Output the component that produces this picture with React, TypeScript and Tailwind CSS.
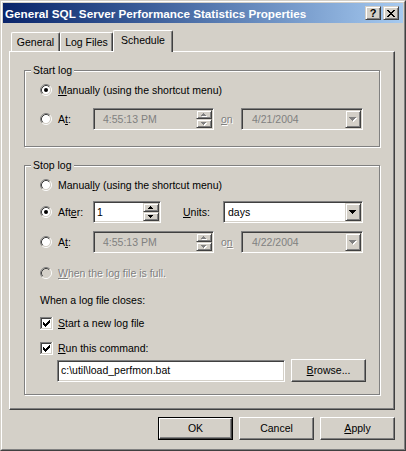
import type { ReactNode } from 'react'

// classic win2000 bevels
const raised =
  'border border-t-white border-l-white border-r-[#404040] border-b-[#404040] shadow-[inset_-1px_-1px_0_#808080]'
const raisedSmall =
  'border border-t-[#d4d0c8] border-l-[#d4d0c8] border-r-[#404040] border-b-[#404040] shadow-[inset_1px_1px_0_#ffffff,inset_-1px_-1px_0_#808080]'
const sunken =
  'border border-t-[#808080] border-l-[#808080] border-r-white border-b-white shadow-[inset_1px_1px_0_#404040,inset_-1px_-1px_0_#d4d0c8]'
const grayText = 'text-[#808080] [text-shadow:1px_1px_0_#ffffff]'

function Radio({ checked, disabled }: { checked?: boolean; disabled?: boolean }) {
  return (
    <svg width="12" height="12" viewBox="0 0 12 12" className="shrink-0">
      <circle cx="6" cy="6" r="4.2" fill={disabled ? '#d4d0c8' : '#ffffff'} />
      <path d="M2.11 9.89A5.5 5.5 0 0 1 9.89 2.11" fill="none" stroke="#808080" />
      <path d="M9.89 2.11A5.5 5.5 0 0 1 2.11 9.89" fill="none" stroke="#ffffff" />
      <path d="M2.82 9.18A4.5 4.5 0 0 1 9.18 2.82" fill="none" stroke="#404040" />
      <path d="M9.18 2.82A4.5 4.5 0 0 1 2.82 9.18" fill="none" stroke="#d4d0c8" />
      {checked && <circle cx="6" cy="6" r="2" fill="#000000" />}
    </svg>
  )
}

function Checkbox() {
  return (
    <svg width="13" height="13" viewBox="0 0 13 13" shapeRendering="crispEdges" className="shrink-0">
      <rect x="0" y="0" width="13" height="13" fill="#ffffff" />
      <rect x="0" y="0" width="12" height="1" fill="#808080" />
      <rect x="0" y="0" width="1" height="12" fill="#808080" />
      <rect x="1" y="1" width="10" height="1" fill="#404040" />
      <rect x="1" y="1" width="1" height="10" fill="#404040" />
      <rect x="1" y="11" width="11" height="1" fill="#d4d0c8" />
      <rect x="11" y="1" width="1" height="11" fill="#d4d0c8" />
      <path
        d="M9 3h1v1H9zM8 4h2v1H8zM3 5h1v1H3zM7 5h3v1H7zM3 6h2v1H3zM6 6h3v1H6zM3 7h5v1H3zM4 8h3v1H4zM5 9h1v1H5z"
        fill="#000000"
      />
    </svg>
  )
}

function Arrow({ up, small, disabled }: { up?: boolean; small?: boolean; disabled?: boolean }) {
  const d = small
    ? up
      ? 'M2 0h1v1H2zM1 1h3v1H1zM0 2h5v1H0z'
      : 'M0 0h5v1H0zM1 1h3v1H1zM2 2h1v1H2z'
    : 'M0 0h7v1H0zM1 1h5v1H1zM2 2h3v1H2zM3 3h1v1H3z'
  const w = small ? 6 : 8
  const h = small ? 4 : 5
  return (
    <svg width={w} height={h} viewBox={`0 0 ${w} ${h}`} shapeRendering="crispEdges">
      {disabled && <path d={d} fill="#ffffff" transform="translate(1 1)" />}
      <path d={d} fill={disabled ? '#808080' : '#000000'} />
    </svg>
  )
}

function Spinner({ disabled }: { disabled?: boolean }) {
  return (
    <div className="flex flex-col w-[16px] self-stretch">
      <div className={`flex-1 flex items-center justify-center bg-[#d4d0c8] ${raisedSmall}`}>
        <Arrow up small disabled={disabled} />
      </div>
      <div className={`flex-1 flex items-center justify-center bg-[#d4d0c8] ${raisedSmall}`}>
        <Arrow small disabled={disabled} />
      </div>
    </div>
  )
}

function DropButton({ disabled }: { disabled?: boolean }) {
  return (
    <div className={`w-[16px] self-stretch flex items-center justify-center bg-[#d4d0c8] ${raisedSmall}`}>
      <Arrow disabled={disabled} />
    </div>
  )
}

function TimeField() {
  return (
    <div className={`w-[121px] h-[22px] p-px flex items-center bg-[#d4d0c8] ${sunken}`}>
      <span className="flex-1 pl-[8px] text-[#808080]">4:55:13 PM</span>
      <Spinner disabled />
    </div>
  )
}

function DateCombo({ value }: { value: string }) {
  return (
    <div className={`w-[122px] h-[22px] p-px flex items-center bg-[#d4d0c8] ${sunken}`}>
      <span className="flex-1 pl-[9px] text-[#808080]">{value}</span>
      <DropButton disabled />
    </div>
  )
}

function Button({ children, isDefault }: { children: ReactNode; isDefault?: boolean }) {
  if (isDefault) {
    return (
      <div className="w-[75px] h-[23px] border border-black">
        <div className={`h-full flex items-center justify-center ${raised}`}>{children}</div>
      </div>
    )
  }
  return <div className={`w-[75px] h-[23px] flex items-center justify-center ${raised}`}>{children}</div>
}

function Group({ label, className, children }: { label: string; className: string; children: ReactNode }) {
  return (
    <div
      className={`relative w-[356px] border border-[#808080] shadow-[inset_1px_1px_0_#ffffff,1px_1px_0_#ffffff] ${className}`}
    >
      <span className="absolute left-[6px] -top-[7px] px-[2px] bg-[#d4d0c8] leading-[13px]">{label}</span>
      {children}
    </div>
  )
}

export default function App() {
  return (
    <div className="w-[406px] h-[451px] bg-[#d4d0c8] border border-t-[#d4d0c8] border-l-[#d4d0c8] border-r-[#404040] border-b-[#404040] font-['Liberation_Sans',Arial,sans-serif] text-[10.5px] leading-[13px] text-black select-none">
      <div className="h-full p-px flex flex-col border border-t-white border-l-white border-r-[#808080] border-b-[#808080]">
        {/* caption bar */}
        <div className="h-[20px] shrink-0 flex items-center pl-[2px] pr-[4px] bg-linear-to-r from-[#0a246a] to-[#a6caf0]">
          <span className="flex-1 text-white font-bold text-[11.7px]">
            General SQL Server Performance Statistics Properties
          </span>
          <div className="flex gap-[2px]">
            <div className={`w-[16px] h-[14px] flex items-center justify-center bg-[#d4d0c8] font-bold text-[11px] ${raisedSmall}`}>
              ?
            </div>
            <div className={`w-[16px] h-[14px] flex items-center justify-center bg-[#d4d0c8] ${raisedSmall}`}>
              <svg width="8" height="7" viewBox="0 0 8 7" shapeRendering="crispEdges">
                <path
                  d="M0 0h2v1H0zM6 0h2v1H6zM1 1h2v1H1zM5 1h2v1H5zM2 2h4v1H2zM3 3h2v1H3zM2 4h4v1H2zM1 5h2v1H1zM5 5h2v1H5zM0 6h2v1H0zM6 6h2v1H6z"
                  fill="#000000"
                />
              </svg>
            </div>
          </div>
        </div>

        <div className="flex-1 pl-[6px] pr-[8px] pt-[7px]">
          {/* tabs */}
          <div className="relative z-10 flex items-end h-[22px] pl-[2px]">
            <div className="w-[49px] h-[19px] mb-px flex items-center justify-center pt-[1px] border-t border-l border-r border-t-white border-l-white border-r-[#404040] rounded-t-[2px] shadow-[inset_-1px_0_0_#808080]">
              General
            </div>
            <div className="w-[53px] h-[19px] mb-px flex items-center justify-center pt-[1px] border-t border-l border-r border-t-white border-l-white border-r-[#404040] rounded-t-[2px] shadow-[inset_-1px_0_0_#808080]">
              Log Files
            </div>
            <div className="w-[60px] h-[22px] flex items-center justify-center pb-[2px] bg-[#d4d0c8] border-t border-l border-r border-t-white border-l-white border-r-[#404040] rounded-t-[2px] shadow-[inset_-1px_0_0_#808080]">
              Schedule
            </div>
          </div>

          {/* tab page */}
          <div className="-mt-px h-[359px] pl-[14px] pt-[18px] border border-t-white border-l-white border-r-[#404040] border-b-[#404040] shadow-[inset_-1px_-1px_0_#808080]">
            <Group label="Start log" className="h-[77px] pt-[11px] pl-[15px]">
              <div className="flex items-center h-[16px]">
                <Radio checked />
                <span className="ml-[6px]">
                  <span className="underline">M</span>anually (using the shortcut menu)
                </span>
              </div>
              <div className="flex items-center h-[22px] mt-[10px]">
                <div className="w-[53px] flex items-center">
                  <Radio />
                  <span className="ml-[6px]">
                    A<span className="underline">t</span>:
                  </span>
                </div>
                <TimeField />
                <span className={`w-[27px] pl-[7px] ${grayText}`}>
                  <span className="underline">o</span>n
                </span>
                <DateCombo value="4/21/2004" />
              </div>
            </Group>

            <Group label="Stop log" className="mt-[18px] h-[230px] pt-[11px] pl-[15px]">
              <div className="flex items-center h-[16px]">
                <Radio />
                <span className="ml-[6px]">
                  Manual<span className="underline">l</span>y (using the shortcut menu)
                </span>
              </div>
              <div className="flex items-center h-[22px] mt-[8px]">
                <div className="w-[53px] flex items-center">
                  <Radio checked />
                  <span className="ml-[6px]">
                    Aft<span className="underline">e</span>r:
                  </span>
                </div>
                <div className={`w-[68px] h-[22px] p-px flex items-center bg-white ${sunken}`}>
                  <span className="flex-1 pl-[2px]">1</span>
                  <Spinner />
                </div>
                <span className="ml-[22px] w-[40px]">
                  <span className="underline">U</span>nits:
                </span>
                <div className={`w-[140px] h-[22px] p-px flex items-center bg-white ${sunken}`}>
                  <span className="flex-1 pl-[3px]">days</span>
                  <DropButton />
                </div>
              </div>
              <div className="flex items-center h-[22px] mt-[8px]">
                <div className="w-[53px] flex items-center">
                  <Radio />
                  <span className="ml-[6px]">
                    A<span className="underline">t</span>:
                  </span>
                </div>
                <TimeField />
                <span className={`w-[27px] pl-[7px] ${grayText}`}>
                  o<span className="underline">n</span>
                </span>
                <DateCombo value="4/22/2004" />
              </div>
              <div className="flex items-center h-[16px] mt-[12px]">
                <Radio disabled />
                <span className={`ml-[6px] ${grayText}`}>
                  <span className="underline">W</span>hen the log file is full.
                </span>
              </div>
              <div className="flex items-center h-[16px] mt-[11px]">When a log file closes:</div>
              <div className="flex items-center h-[16px] mt-[7px]">
                <Checkbox />
                <span className="ml-[5px]">
                  <span className="underline">S</span>tart a new log file
                </span>
              </div>
              <div className="flex items-center h-[16px] mt-[9px]">
                <Checkbox />
                <span className="ml-[5px]">
                  <span className="underline">R</span>un this command:
                </span>
              </div>
              <div className="flex items-center h-[23px] mt-[3px] pl-[17px]">
                <div className={`w-[228px] h-[22px] p-px flex items-center bg-white ${sunken}`}>
                  <span className="pl-[2px]">c:\util\load_perfmon.bat</span>
                </div>
                <div className="ml-[6px]">
                  <Button>
                    <span>
                      <span className="underline">B</span>rowse...
                    </span>
                  </Button>
                </div>
              </div>
            </Group>
          </div>

          {/* dialog buttons */}
          <div className="flex justify-end gap-[6px] mt-[7px]">
            <Button isDefault>OK</Button>
            <Button>Cancel</Button>
            <Button>
              <span>
                <span className="underline">A</span>pply
              </span>
            </Button>
          </div>
        </div>
      </div>
    </div>
  )
}
